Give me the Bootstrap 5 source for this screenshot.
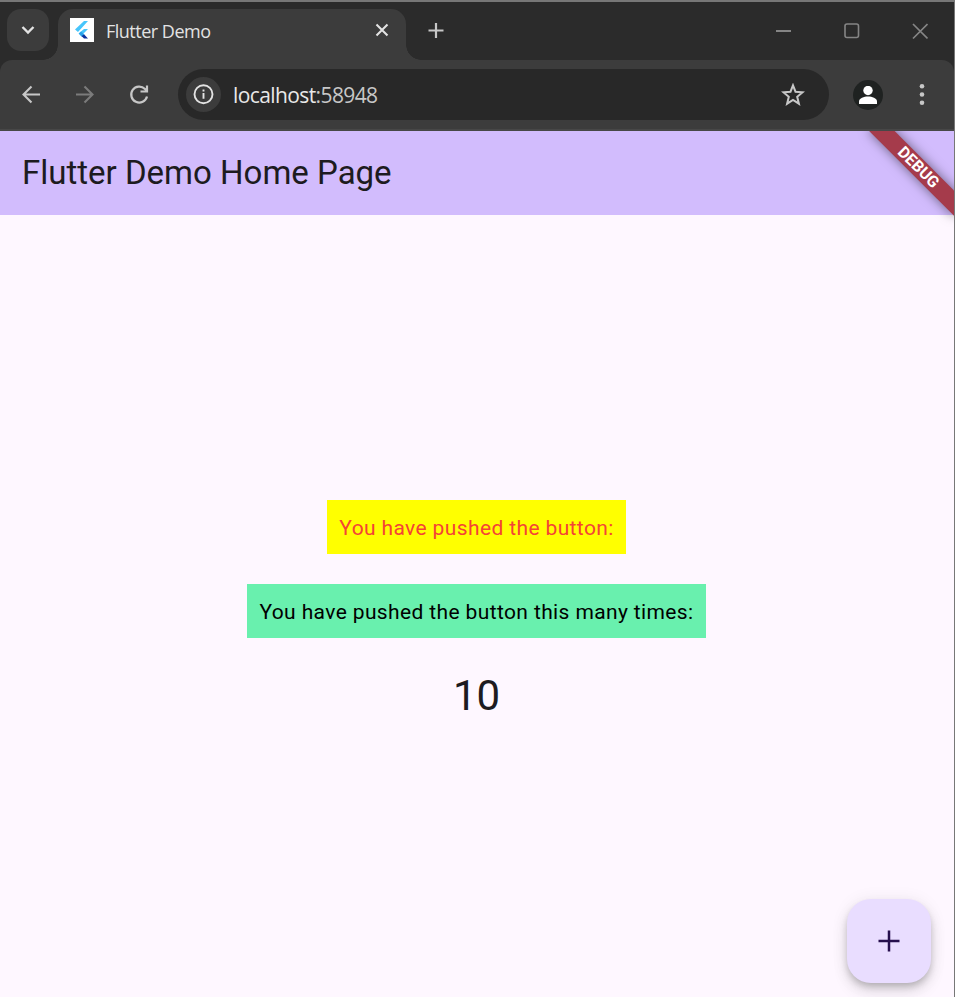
<!DOCTYPE html>
<html lang="en">
<head>
<meta charset="utf-8">
<meta name="viewport" content="width=device-width, initial-scale=1">
<title>Flutter Demo</title>
<link href="https://cdn.jsdelivr.net/npm/bootstrap@5.3.0/dist/css/bootstrap.min.css" rel="stylesheet">
<style>
body{margin:0;background:#fef7ff}
svg{display:block;flex:none}
.window{height:997px;border-top:2px solid #777;border-right:1px solid #777;font-family:Roboto,sans-serif}
.strip{height:58px;background:#2b2b2b;padding-left:7px}
.tab-search{width:42px;height:42px;border-radius:14px;background:#3c3c3c;margin-top:7px}
.tab-item{width:348px;height:51px;margin:7px 0 0 9px;padding:0 13px 9px 12px;background:#3c3c3c;border-radius:15px 15px 0 0}
.tab-item::before,.tab-item::after{content:"";position:absolute;bottom:0;width:15px;height:15px}
.tab-item::before{left:-15px;background:radial-gradient(circle at 0 0,transparent 14.5px,#3c3c3c 15px)}
.tab-item::after{right:-15px;background:radial-gradient(circle at 100% 0,transparent 14.5px,#3c3c3c 15px)}
.tab-title{font:18px/24px "Open Sans",sans-serif;letter-spacing:-.5px;color:#e3e3e3;margin-left:12px;padding-top:2px}
.new-tab{margin:20px 0 0 21px}
.win-ctl{gap:52px;padding:20px 26px 0 0}
.toolbar-outer{background:#2b2b2b}
.toolbar-row{height:71px;background:#3c3c3c;border-bottom:2px solid #474747;border-radius:12px 12px 0 0;padding:0 19px 0 19px}
.nav-gap{margin-left:30px}
.omni{width:651px;height:51px;border-radius:26px;background:#282828;margin-left:27px;padding:0 24px 0 8px}
.info{width:35px;height:35px;border-radius:50%;background:#3c3c3c}
.url{font:21px/30px "Open Sans",sans-serif;letter-spacing:-.6px;color:#c7c7c7;margin-left:12px}
.url span{color:#e8e8e8}
.avatar{width:30px;height:30px;border-radius:50%;background:#1f2221;margin-left:24px}
.app-title{height:84px;background:#d2bcfd;color:#1d1b20;font-size:33px;line-height:84px;padding-left:22px}
.ribbon{right:-60px;top:42px;width:120px;height:18px;background:#a53b4b;box-shadow:0 0 12px rgba(0,0,0,.5);transform-origin:60px -42px;transform:rotate(45deg);color:#fff;font-size:16px;font-weight:700;line-height:17px;padding-left:1px}
.label-box{height:54px;padding:0 12px;font-size:21px;line-height:57px;letter-spacing:.375px;color:#000}
.yellow{background:#ff0;color:#f44336}
.green{background:#69f0ae}
.stack{padding:285px 1px 0 0;gap:30px}
.count{font-size:42px;line-height:56px;color:#1d1b20}
.fab{right:23px;bottom:14px;width:84px;height:84px;border-radius:24px;background:#e9ddff;box-shadow:0 4.5px 7.5px -1.5px rgba(0,0,0,.2),0 9px 15px rgba(0,0,0,.1),0 1.5px 18px rgba(0,0,0,.07)}
</style>
<script src="https://cdn.jsdelivr.net/npm/bootstrap@5.3.0/dist/js/bootstrap.bundle.min.js"></script>
</head>
<body>
<div class="window d-flex flex-column overflow-hidden">
  <div class="strip d-flex align-items-start">
    <div class="tab-search d-flex align-items-center justify-content-center">
      <svg width="14" height="10" viewBox="0 0 14 10" fill="none" stroke="#e3e3e3" stroke-width="2.4"><path d="M1.5 2 7 7.5 12.500 2"/></svg>
    </div>
    <div class="tab-item position-relative d-flex align-items-center">
      <svg width="24" height="24" viewBox="0 0 24 24"><path fill="#fff" d="M0 0h24v24H0z"/><path fill="#47c5fb" d="M14 3h4L8 14l-3-2.500zM14 11h4l-4.500 4.500L11 18l-2.500-2.500z"/><path fill="#29a0e8" d="m9 15.500 2-2 3.500 3-2.500 2.500z"/><path fill="#0a2f9c" d="m11.500 18 2.700-1.500L18 20.500h-4z"/></svg>
      <span class="tab-title">Flutter Demo</span>
      <svg class="ms-auto" width="22" height="22" viewBox="0 0 22 22" stroke="#e3e3e3" stroke-width="2.1"><path d="m5.500 5.500 11 11m0-11-11 11"/></svg>
    </div>
    <svg class="new-tab" width="18" height="18" viewBox="0 0 18 18" stroke="#c7c7c7" stroke-width="2.2"><path d="M1.500 8.500h15M9 1v15"/></svg>
    <div class="win-ctl d-flex ms-auto">
      <svg width="16" height="18" viewBox="0 0 16 18" stroke="#858585" stroke-width="2"><path d="M0 9h15"/></svg>
      <svg width="16" height="18" viewBox="0 0 16 18" fill="none" stroke="#858585" stroke-width="1.600"><rect x="1" y="2" width="13.500" height="13.500" rx="2"/></svg>
      <svg width="16" height="18" viewBox="0 0 16 18" stroke="#858585" stroke-width="1.700"><path d="m1 2 14.500 14.500m0-14.500L1 16.500"/></svg>
    </div>
  </div>
  <div class="toolbar-outer">
    <div class="toolbar-row d-flex align-items-center">
      <svg width="24" height="24" viewBox="0 0 24 24" fill="none" stroke="#c7c7c7" stroke-width="2.100"><path d="M21 11.500H4.500M12.500 3.500l-8 8 8 8"/></svg>
      <svg class="nav-gap" width="24" height="24" viewBox="0 0 24 24" fill="none" stroke="#7b7b7b" stroke-width="2.100"><path d="M3 11.500h16.500M11.500 3.500l8 8-8 8"/></svg>
      <svg class="nav-gap" width="24" height="24" viewBox="0 0 24 24" fill="none" stroke="#c7c7c7" stroke-width="2.200"><path d="M20 13.500a8 8 0 1 1-2-7.500L20 8M20 2.500v6h-6.500"/></svg>
      <div class="omni d-flex align-items-center">
        <div class="info d-flex align-items-center justify-content-center">
          <svg width="21" height="21" viewBox="0 0 21 21" fill="none" stroke="#e3e3e3" stroke-width="1.900"><circle cx="10.500" cy="10.300" r="9"/><path d="M10.500 9.100v5.700M10.500 5.600v2"/></svg>
        </div>
        <div class="url"><span>localhost</span>:58948</div>
        <svg class="ms-auto" width="24" height="24" viewBox="0 0 24 24" fill="none" stroke="#c7c7c7" stroke-width="2"><path d="m12 2.300 2.500 6.400 7.100.6-5.400 4.500 1.700 6.900-5.900-3.800-5.900 3.800 1.700-6.900-5.400-4.500 7.100-.6z"/></svg>
      </div>
      <div class="avatar d-flex align-items-center justify-content-center">
        <svg width="18" height="18" viewBox="0 0 18 18" fill="#fff"><circle cx="9" cy="4.500" r="4.700"/><path d="M0 18v-2.500C0 12 5 10.500 9 10.500s9 1.500 9 5V18z"/></svg>
      </div>
      <svg class="ms-auto" width="26" height="24" viewBox="0 0 26 24" fill="#c7c7c7"><circle cx="13" cy="3.200" r="2.300"/><circle cx="13" cy="11.500" r="2.300"/><circle cx="13" cy="19.800" r="2.300"/></svg>
    </div>
  </div>
  <main class="position-relative overflow-hidden flex-grow-1">
    <div class="app-title">Flutter Demo Home Page</div>
    <div class="ribbon position-absolute text-center">DEBUG</div>
    <div class="stack d-flex flex-column align-items-center">
      <div class="label-box yellow">You have pushed the button:</div>
      <div class="label-box green">You have pushed the button this many times:</div>
      <div class="count">10</div>
    </div>
    <div class="fab position-absolute d-flex align-items-center justify-content-center">
      <svg width="22" height="22" viewBox="0 0 22 22" stroke="#260f4d" stroke-width="2.500"><path d="M.5 11h21M11 .5v21"/></svg>
    </div>
  </main>
</div>
</body>
</html>
